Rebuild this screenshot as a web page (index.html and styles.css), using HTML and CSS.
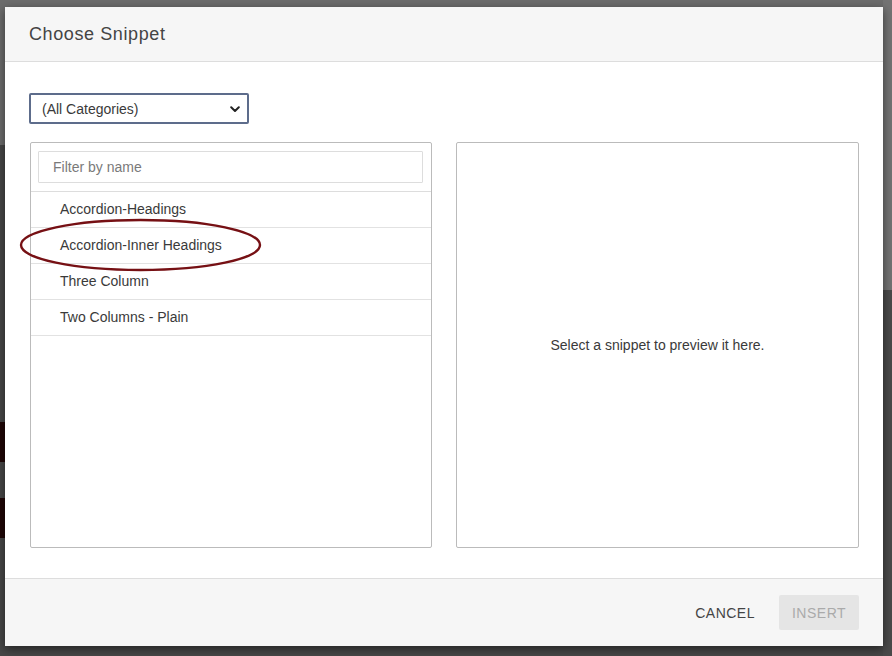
FILE: index.html
```html
<!DOCTYPE html>
<html lang="en">
<head>
<meta charset="utf-8">
<title>Choose Snippet</title>
<link rel="stylesheet" href="styles.css">
</head>
<body>
<div class="modal">
  <div class="modal-header">
    <h1 class="modal-title">Choose Snippet</h1>
  </div>
  <div class="modal-body">
    <div class="category-select">
      <span>(All Categories)</span>
      <svg class="chevron" width="10" height="7" viewBox="0 0 10 7"><path d="M1.2 1.3 L5 5 L8.8 1.3" fill="none" stroke="#222" stroke-width="2" stroke-linecap="round" stroke-linejoin="round"/></svg>
    </div>
    <div class="panels">
      <div class="panel list-panel">
        <div class="filter-wrap">
          <div class="filter-input">Filter by name</div>
        </div>
        <ul class="snippet-list">
          <li class="snippet-item">Accordion-Headings</li>
          <li class="snippet-item marked">Accordion-Inner Headings
            <svg class="annotation" width="246" height="56" viewBox="0 0 246 56"><ellipse cx="122.5" cy="28" rx="119.5" ry="25" fill="none" stroke="#761014" stroke-width="2.4"/></svg>
          </li>
          <li class="snippet-item">Three Column</li>
          <li class="snippet-item">Two Columns - Plain</li>
        </ul>
      </div>
      <div class="panel preview-panel">
        <p class="preview-hint">Select a snippet to preview it here.</p>
      </div>
    </div>
  </div>
  <div class="modal-footer">
    <button class="btn btn-cancel">Cancel</button>
    <button class="btn btn-insert" disabled>Insert</button>
  </div>
</div>
</body>
</html>
```

FILE: styles.css
```css
* { box-sizing: border-box; }

html, body { height: 100%; }

body {
  margin: 0;
  padding: 7px 9px 10px 5px;
  font-family: "Liberation Sans", Arial, sans-serif;
  font-size: 14px;
  color: #3a3a3a;
  background:
    linear-gradient(#1f0606, #1f0606) 0 422px / 5px 40px no-repeat,
    linear-gradient(#1f0606, #1f0606) 0 498px / 5px 40px no-repeat,
    linear-gradient(#737373 0 290px, #4a4a4a 290px) right top / 9px 100% no-repeat,
    linear-gradient(#6c6c6c 0 145px, #474747 145px);
}

.modal {
  height: 639px;
  background: #fff;
  display: flex;
  flex-direction: column;
  box-shadow: 0 3px 9px rgba(0, 0, 0, 0.5);
}

.modal-header {
  height: 55px;
  background: #f6f6f6;
  border-bottom: 1px solid #ddd;
  display: flex;
  align-items: center;
  padding: 0 24px;
}

.modal-title {
  margin: 0;
  font-size: 18px;
  font-weight: normal;
  letter-spacing: 0.6px;
  color: #444;
  padding-top: 1px;
}

.modal-body {
  flex: 1;
  padding: 31px 25px 0 24px;
  display: flex;
  flex-direction: column;
}

.category-select {
  width: 220px;
  height: 31px;
  border: 2px solid #5d6c8b;
  border-radius: 2px;
  display: flex;
  align-items: center;
  justify-content: space-between;
  padding: 0 6px 0 11px;
  color: #3a3a3a;
  font-size: 14px;
}

.chevron { margin-top: 1px; margin-right: 1px; }

.panels {
  margin-top: 18px;
  display: grid;
  grid-template-columns: 402px 403px;
  gap: 24px;
  padding-left: 1px;
}

.panel {
  height: 406px;
  border: 1px solid #bbb;
  border-radius: 2px;
}

.filter-wrap {
  padding: 8px 8px 8px 7px;
  border-bottom: 1px solid #ddd;
}

.filter-input {
  height: 32px;
  border: 1px solid #ddd;
  border-radius: 1px;
  display: flex;
  align-items: center;
  padding-left: 14px;
  color: #7a7a7a;
}

.snippet-list {
  list-style: none;
  margin: 0;
  padding: 0;
}

.snippet-item {
  position: relative;
  height: 36px;
  border-bottom: 1px solid #e2e2e2;
  display: flex;
  align-items: center;
  padding-left: 29px;
  padding-bottom: 1px;
  color: #3a3a3a;
}

.annotation {
  position: absolute;
  left: -13px;
  top: -11px;
  pointer-events: none;
}

.preview-panel {
  display: flex;
  align-items: center;
  justify-content: center;
}

.preview-hint {
  margin: 0;
  color: #3a3a3a;
}

.modal-footer {
  height: 68px;
  background: #f6f6f6;
  border-top: 1px solid #ddd;
  display: flex;
  align-items: center;
  justify-content: flex-end;
  padding: 0 24px 0 0;
  gap: 12px;
}

.btn {
  font-family: "Liberation Sans", Arial, sans-serif;
  font-size: 14px;
  text-transform: uppercase;
  letter-spacing: 0.5px;
  border: none;
  border-radius: 2px;
  height: 35px;
  padding: 0 12px;
  background: transparent;
}

.btn-cancel { color: #444; }

.btn-insert {
  width: 80px;
  background: #e5e5e5;
  color: #aaa;
}
```
